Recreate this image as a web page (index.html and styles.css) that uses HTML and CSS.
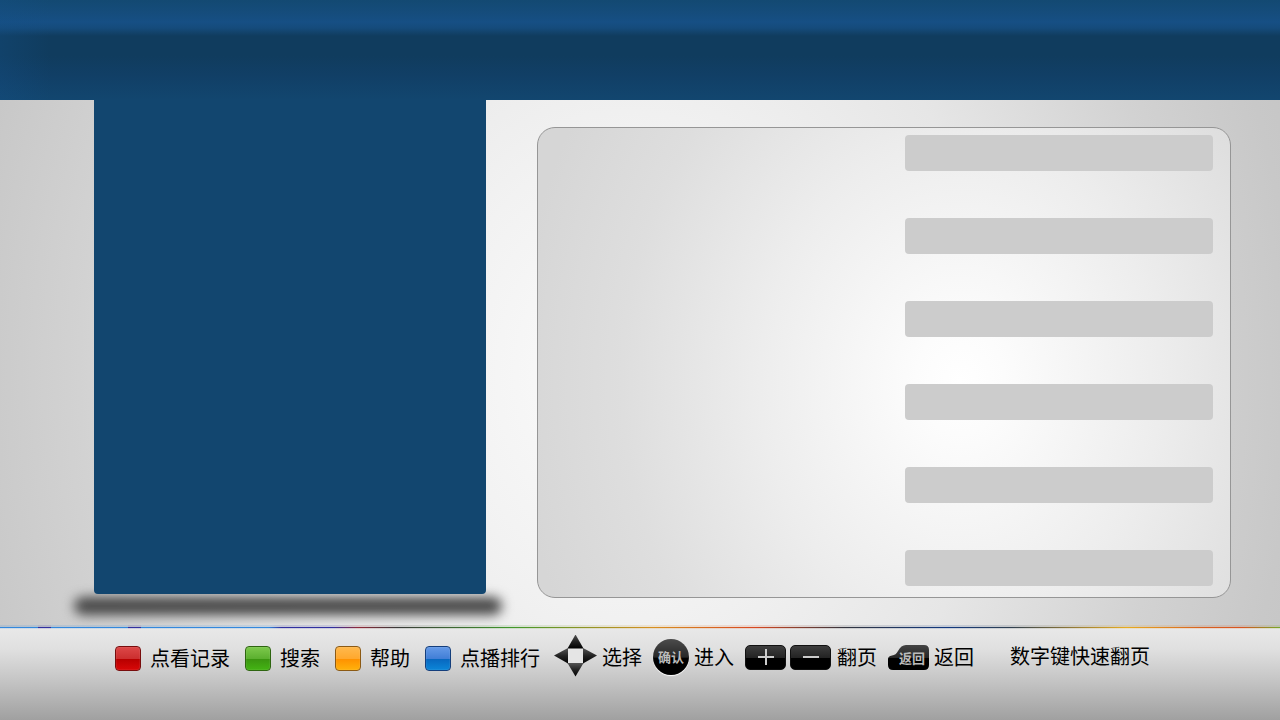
FILE: index.html
```html
<!DOCTYPE html>
<html lang="zh-CN">
<head>
<meta charset="utf-8">
<meta name="viewport" content="width=device-width, initial-scale=1">
<title>点播</title>
<link rel="stylesheet" href="styles.css">
</head>
<body>
<header class="banner"></header>
<main class="stage">
  <section class="poster-area"><div class="poster"></div></section>
  <section class="panel">
    <ul class="slots">
      <li class="slot"></li>
      <li class="slot"></li>
      <li class="slot"></li>
      <li class="slot"></li>
      <li class="slot"></li>
      <li class="slot"></li>
    </ul>
  </section>
</main>
<footer class="footer">
  <div class="rainbow"></div>
  <div class="keys">
    <div class="group group-color">
      <button class="key" type="button"><span class="chip chip-red"></span>点看记录</button>
      <button class="key" type="button"><span class="chip chip-green"></span>搜索</button>
      <button class="key" type="button"><span class="chip chip-orange"></span>帮助</button>
      <button class="key" type="button"><span class="chip chip-blue"></span>点播排行</button>
    </div>
    <div class="group group-remote">
      <button class="key key-near" type="button">
        <svg class="arrows" width="44" height="44" viewBox="0 1 44 44" aria-hidden="true">
          <defs>
            <linearGradient id="shade" x1="0" y1="0" x2="0" y2="1"><stop offset="0" stop-color="#555"/><stop offset=".5" stop-color="#222"/><stop offset="1" stop-color="#000"/></linearGradient>
          </defs>
          <path d="M15 14h15v15H15z" fill="#e5e5e5"/>
          <path d="M22.500 0.500L30.500 14.500h-16z" fill="url(#shade)"/>
          <path d="M22.500 42.500L30.500 29h-16z" fill="url(#shade)"/>
          <path d="M1 21.500L15 14v15.500z" fill="url(#shade)"/>
          <path d="M44 21.500L30 14v15.500z" fill="url(#shade)"/>
        </svg>选择
      </button>
      <button class="key key-near" type="button"><span class="round">确认</span>进入</button>
      <button class="key key-pages" type="button">
        <span class="cap"><svg width="20" height="20" viewBox="0 0 20 20" aria-hidden="true"><path d="M2 10h16M10 2v16" stroke="#ccc" stroke-width="2"/></svg></span>
        <span class="cap"><svg width="20" height="20" viewBox="0 0 20 20" aria-hidden="true"><path d="M2 10h16" stroke="#ccc" stroke-width="2"/></svg></span>
        <span class="key-text">翻页</span>
      </button>
      <button class="key key-near" type="button">
        <span class="back">
          <svg class="back-shape" width="41" height="25" viewBox="0 0 41 25" aria-hidden="true">
            <defs><linearGradient id="back" x1="0" y1="0" x2="0" y2="1"><stop offset="0" stop-color="#444"/><stop offset=".52" stop-color="#252525"/><stop offset=".54" stop-color="#000"/><stop offset="1" stop-color="#000"/></linearGradient></defs>
            <path d="M0 14Q0 11 4 10.500Q8 10 10 6Q13 0 18 0H36Q41 0 41 5V20Q41 25 36 25H5Q0 25 0 20Z" fill="url(#back)"/>
          </svg>
          <span class="back-text">返回</span>
        </span>返回
      </button>
    </div>
    <p class="hint">数字键快速翻页</p>
  </div>
</footer>
</body>
</html>
```
FILE: styles.css
```css
* { box-sizing: border-box; }

body {
  margin: 0;
  min-height: 100vh;
  display: flex;
  flex-direction: column;
  font-family: "Noto Sans CJK SC", sans-serif;
  font-size: 20px;
  line-height: 30px;
  color: #000;
  background: #ccc;
}

.banner {
  height: 100px;
  background:
    linear-gradient(90deg, rgba(20, 80, 135, .3), rgba(20, 80, 135, 0) 4%),
    linear-gradient(#134972 0, #154c7b 12px, #164f84 22px, #154b7b 28px, #103c5e 36px, #103c5e 56px, #113f66 75px, #12466f 100px);
}

.stage {
  flex: 1;
  display: grid;
  grid-template-columns: 392fr 694fr;
  gap: 51px;
  padding: 0 49px 0 94px;
  background: radial-gradient(ellipse 740px 900px at 49% 52%, #fcfcfc 0, #f2f2f2 25%, #e6e6e6 50%, #d2d2d2 74%, #c8c8c8 90%, #c4c4c4 100%);
}

.poster-area {
  display: flex;
  position: relative;
  padding-bottom: 33px;
}

.poster-area::before {
  content: "";
  position: absolute;
  left: -20px;
  right: -16px;
  bottom: 12px;
  height: 18px;
  border-radius: 9px;
  background: #484848;
  filter: blur(6px);
}

.poster {
  position: relative;
  flex: 1;
  min-height: 494px;
  border-radius: 0 0 4px 4px;
  background: #12466f;
}

.panel {
  display: flex;
  justify-content: flex-end;
  margin: 27px 0 29px;
  padding: 7px 17px;
  border: 1px solid #969696;
  border-radius: 18px;
  background: radial-gradient(ellipse 445px 530px at 61% 54%, #fff 0, #fcfcfc 10%, #ededed 45%, #dedede 76%, #d6d6d6 100%);
}

.slots {
  width: 308px;
  display: flex;
  flex-direction: column;
  gap: 47px;
  margin: 0;
  padding: 0;
  list-style: none;
}

.slot {
  height: 36px;
  border-radius: 4px;
  background: #ccc;
}

.footer {
  min-height: 93px;
  background: linear-gradient(#e9e9e9, #e0e0e0 22px, #c8c8c8 50px, #a0a0a0);
}

.rainbow,
.rainbow::after {
  height: 1px;
  background: linear-gradient(90deg, #3388dd 0%, #3388dd 3%, #3030a0 3%, #3030a0 4%, #3388dd 4%, #3388dd 10%, #3030a0 10%, #3030a0 11%, #3388dd 11%, #3388dd 21%, #3030a0 22%, #3030a0 26%, #902838 28%, #3a3a3a 31%, #40982a 40%, #d89020 51%, #d84820 59%, #33353f 66%, #103880 74%, #304050 79%, #e8ac20 88%, #d86020 94%, #d85420 97%, #78a828 100%);
}

.rainbow { position: relative; }

.rainbow::after {
  content: "";
  position: absolute;
  inset: -2px 0 0;
  height: 4px;
  opacity: .15;
}

.keys {
  display: flex;
  padding: 5px 49px 0 115px;
}

.group { display: flex; }

.group-color {
  gap: 15px;
  padding-top: 4px;
  align-items: flex-start;
}

.group-color .key { height: 42px; }

.group-remote {
  gap: 11px;
  margin-left: 13px;
}

.key {
  height: 48px;
  display: flex;
  align-items: center;
  gap: 9px;
  padding: 0;
  border: 0;
  background: none;
  color: inherit;
  font: inherit;
  white-space: nowrap;
  cursor: pointer;
}

.key-near { gap: 5px; }

.key-pages { gap: 4px; }

.key-text { margin-left: 2px; }

.chip {
  width: 26px;
  height: 25px;
  border: 1px solid;
  border-radius: 4px;
  box-shadow: inset 0 0 1px rgba(255, 255, 255, .6);
}

.chip-red {
  border-color: #780d0d;
  background: linear-gradient(#dc4848, #cc2f2f 50%, #b80000 54%, #d80808);
}

.chip-green {
  border-color: #2e6510;
  background: linear-gradient(#7dc94c, #5cb030 50%, #3b9610 54%, #44b414);
}

.chip-orange {
  border-color: #8c5a14;
  background: linear-gradient(#ffb94d, #ffa82e 50%, #ff9200 54%, #ffb20c);
}

.chip-blue {
  border-color: #143e7c;
  background: linear-gradient(#659ae8, #427fd6 50%, #0868c0 54%, #0c86d8);
}

.round {
  width: 36px;
  height: 36px;
  border-radius: 50%;
  background: linear-gradient(#4c4c4c, #282828 50%, #000 54%);
  box-shadow: 0 1px 1px #fff;
  color: #bbb;
  font-size: 13px;
  font-weight: 700;
  line-height: 36px;
  text-align: center;
}

.cap {
  width: 41px;
  height: 25px;
  display: flex;
  align-items: center;
  justify-content: center;
  border: 1px solid #111;
  border-radius: 5px;
  background: linear-gradient(#3d3d3d, #242424 50%, #000 54%);
}

.back {
  position: relative;
  width: 41px;
  height: 25px;
  color: #bbb;
  font-size: 13px;
  font-weight: 700;
  line-height: 25px;
}

.back-shape {
  position: absolute;
  inset: 0;
}

.back-text {
  position: relative;
  display: block;
  padding-right: 4px;
  text-align: right;
}

.hint {
  margin: 8px 0 0 36px;
  white-space: nowrap;
}
```
